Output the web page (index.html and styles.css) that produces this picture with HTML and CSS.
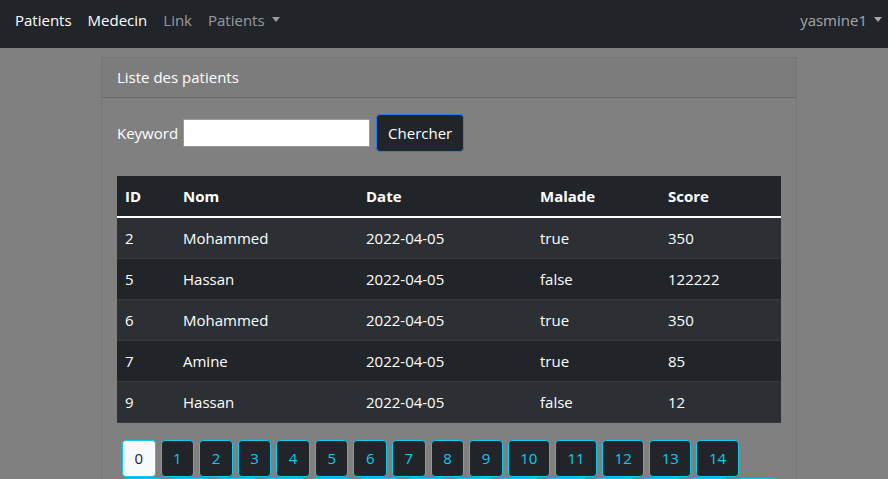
FILE: index.html
```html
<!DOCTYPE html>
<html lang="fr">
<head>
<meta charset="utf-8">
<title>Patients</title>
<link rel="stylesheet" href="styles.css">
</head>
<body>
<nav class="navbar">
  <ul class="nav-list">
    <li><a class="nav-link active" href="#">Patients</a></li>
    <li><a class="nav-link active" href="#">Medecin</a></li>
    <li><a class="nav-link" href="#">Link</a></li>
    <li><a class="nav-link dropdown-toggle" href="#">Patients</a></li>
  </ul>
  <ul class="nav-list nav-right">
    <li><a class="nav-link user dropdown-toggle" href="#">yasmine1</a></li>
  </ul>
</nav>

<main class="container">
  <section class="card">
    <div class="card-header">Liste des patients</div>
    <div class="card-body">
      <form class="search-form">
        <label class="search-label">Keyword</label>
        <input class="search-input" type="text">
        <button class="btn-search" type="button">Chercher</button>
      </form>

      <table class="table">
        <thead>
          <tr><th class="c-id">ID</th><th class="c-nom">Nom</th><th class="c-date">Date</th><th class="c-mal">Malade</th><th class="c-score">Score</th></tr>
        </thead>
        <tbody>
          <tr><td>2</td><td>Mohammed</td><td>2022-04-05</td><td>true</td><td>350</td></tr>
          <tr><td>5</td><td>Hassan</td><td>2022-04-05</td><td>false</td><td>122222</td></tr>
          <tr><td>6</td><td>Mohammed</td><td>2022-04-05</td><td>true</td><td>350</td></tr>
          <tr><td>7</td><td>Amine</td><td>2022-04-05</td><td>true</td><td>85</td></tr>
          <tr><td>9</td><td>Hassan</td><td>2022-04-05</td><td>false</td><td>12</td></tr>
        </tbody>
      </table>

      <ul class="pages">
        <li><a class="page-btn current" href="#">0</a></li>
        <li><a class="page-btn" href="#">1</a></li>
        <li><a class="page-btn" href="#">2</a></li>
        <li><a class="page-btn" href="#">3</a></li>
        <li><a class="page-btn" href="#">4</a></li>
        <li><a class="page-btn" href="#">5</a></li>
        <li><a class="page-btn" href="#">6</a></li>
        <li><a class="page-btn" href="#">7</a></li>
        <li><a class="page-btn" href="#">8</a></li>
        <li><a class="page-btn" href="#">9</a></li>
        <li><a class="page-btn" href="#">10</a></li>
        <li><a class="page-btn" href="#">11</a></li>
        <li><a class="page-btn" href="#">12</a></li>
        <li><a class="page-btn" href="#">13</a></li>
        <li><a class="page-btn" href="#">14</a></li>
        <li><a class="page-btn" href="#">15</a></li>
        <li><a class="page-btn" href="#">16</a></li>
        <li><a class="page-btn" href="#">17</a></li>
        <li><a class="page-btn" href="#">18</a></li>
        <li><a class="page-btn" href="#">19</a></li>
        <li><a class="page-btn" href="#">20</a></li>
        <li><a class="page-btn" href="#">21</a></li>
        <li><a class="page-btn" href="#">22</a></li>
        <li><a class="page-btn" href="#">23</a></li>
        <li><a class="page-btn" href="#">24</a></li>
        <li><a class="page-btn" href="#">25</a></li>
        <li><a class="page-btn" href="#">26</a></li>
        <li><a class="page-btn" href="#">27</a></li>
        <li><a class="page-btn" href="#">28</a></li>
      </ul>
    </div>
  </section>
</main>
</body>
</html>
```

FILE: styles.css
```css
* { box-sizing: border-box; }

html, body {
  margin: 0;
  padding: 0;
  background: #808080;
  font-family: "Open Sans", "Noto Sans", sans-serif;
  font-size: 15px;
  line-height: 24px;
  color: #fff;
  overflow: hidden;
}

a { text-decoration: none; }
ul { list-style: none; margin: 0; padding: 0; }

/* Navbar */
.navbar {
  height: 48px;
  background: #212529;
  display: flex;
  justify-content: space-between;
  align-items: flex-start;
  padding: 8px 0 0 7px;
}
.nav-list { display: flex; }
.nav-link {
  display: block;
  padding: 0 8px;
  color: rgba(255, 255, 255, 0.55);
}
.nav-link.active { color: #fff; }
.nav-link.user { padding-right: 6px; color: rgba(255, 255, 255, 0.6); }
.dropdown-toggle::after {
  content: "";
  display: inline-block;
  margin-left: 7px;
  vertical-align: 4px;
  border-top: 5px solid currentColor;
  border-left: 4.5px solid transparent;
  border-right: 4.5px solid transparent;
}

/* Card */
.container {
  width: 696px;
  margin: 9px 0 0 101px;
}
.card {
  border: 1px solid rgba(0, 0, 0, 0.08);
  border-bottom: none;
}
.card-header {
  background: rgba(0, 0, 0, 0.03);
  border-bottom: 1px solid rgba(0, 0, 0, 0.16);
  padding: 7px 15px 8px;
  color: #fff;
}
.card-body {
  padding: 16px 15px 0;
}

/* Search */
.search-form {
  display: flex;
  align-items: center;
  margin-bottom: 24px;
}
.search-label { margin-right: 5px; }
.search-input {
  width: 187px;
  height: 28px;
  border: 1px solid #9a9a9a;
  background: #fff;
  margin: 0 6px 0 0;
  padding: 0 4px;
  font: inherit;
}
.btn-search {
  height: 38px;
  padding: 0 11px;
  background: #212529;
  border: 1px solid #2b7bf5;
  border-radius: 4px;
  color: #fff;
  font: inherit;
  line-height: 24px;
}

/* Table */
.table {
  width: 664px;
  border-collapse: collapse;
  margin-bottom: 17px;
}
.table th, .table td {
  text-align: left;
  padding: 8px 8px;
  line-height: 24px;
}
.table th {
  font-weight: 700;
  background: #212529;
  border-bottom: 2px solid #fff;
}
.table td { border-bottom: 1px solid #373b3e; }
.table tbody tr:nth-child(odd) td { background: #2c3034; }
.table tbody tr:nth-child(even) td { background: #212529; }
.c-id { width: 58px; }
.c-nom { width: 183px; }
.c-date { width: 174px; }
.c-mal { width: 128px; }
.c-score { width: 121px; }

/* Pagination */
.pages {
  display: flex;
  flex-wrap: wrap;
  column-gap: 5px;
  row-gap: 1px;
  padding-left: 5px;
}
.page-btn {
  display: block;
  height: 37px;
  padding: 0 11.5px;
  line-height: 35px;
  border: 1px solid #0dcaf0;
  border-radius: 4px;
  background: #212529;
  color: #0dcaf0;
}
.page-btn.current {
  background: #f8f9fa;
  color: #212529;
}
```
